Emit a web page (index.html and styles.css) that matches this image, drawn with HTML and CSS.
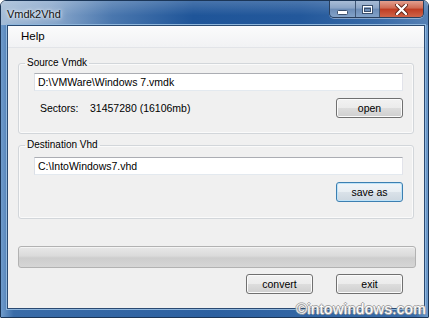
FILE: index.html
```html
<!DOCTYPE html>
<html lang="en">
<head>
  <meta charset="UTF-8" />
  <title>Vmdk2Vhd</title>
  <link rel="stylesheet" href="styles.css">
</head>
<body>
  <div class="window">
    <div class="titlebar">
      <span class="title">Vmdk2Vhd</span>
      <div class="caption-btns">
        <span class="cap cap-min">
          <svg width="11" height="5" viewBox="0 0 11 5"><rect x="0.5" y="0.5" width="10" height="4" rx="1" fill="#fff" stroke="#3a4f6c" stroke-width="1"/></svg>
        </span>
        <span class="cap cap-max">
          <svg width="11" height="9" viewBox="0 0 11 9"><rect x="0.5" y="0.5" width="10" height="8" fill="none" stroke="#3a4f6c"/><rect x="1.5" y="1.5" width="8" height="6" fill="none" stroke="#fff" stroke-width="1"/><rect x="2.5" y="3.5" width="6" height="3" fill="none" stroke="#3a4f6c" stroke-width="1"/></svg>
        </span>
        <span class="cap cap-close">
          <svg width="13" height="11" viewBox="0 0 13 11"><path d="M2 1 L11 10 M11 1 L2 10" stroke="#5a2015" stroke-width="4" stroke-linecap="round"/><path d="M2 1 L11 10 M11 1 L2 10" stroke="#fff" stroke-width="2.4" stroke-linecap="round"/></svg>
        </span>
      </div>
    </div>

    <div class="frame-body">
      <div class="client">
        <div class="menubar"><span class="menu-item">Help</span></div>

        <fieldset class="group group-source">
          <legend>Source Vmdk</legend>
          <div class="group-body">
            <div class="textbox">D:\VMWare\Windows 7.vmdk</div>
            <div class="row">
              <span class="label">Sectors:</span>
              <span class="value">31457280 (16106mb)</span>
              <button class="btn">open</button>
            </div>
          </div>
        </fieldset>

        <fieldset class="group group-dest">
          <legend>Destination Vhd</legend>
          <div class="group-body">
            <div class="textbox">C:\IntoWindows7.vhd</div>
            <div class="row">
              <button class="btn btn-focus">save as</button>
            </div>
          </div>
        </fieldset>

        <div class="progress"></div>

        <div class="actions">
          <button class="btn">convert</button>
          <button class="btn">exit</button>
        </div>
      </div>
    </div>
  </div>

  <div class="watermark">©intowindows.com</div>
</body>
</html>
```

FILE: styles.css
```css
body {
  margin: 0;
  background: #ffffff;
  font-family: 'Liberation Sans', Arial, sans-serif;
  position: relative;
  width: 434px;
  height: 320px;
  overflow: hidden;
}

.window {
  width: 429px;
  height: 318px;
  box-sizing: border-box;
  border: 1px solid #1b3658;
  border-radius: 6px 6px 1px 1px;
  overflow: hidden;
  display: flex;
  flex-direction: column;
}

.titlebar {
  height: 24px;
  display: flex;
  justify-content: space-between;
  align-items: flex-start;
  background:
    linear-gradient(rgba(255, 255, 255, 0.18), rgba(255, 255, 255, 0) 60%),
    linear-gradient(90deg, #a4bcd7 0, #8aa8cc 12%, #4a77ae 26%, #1f5599 45%, #23589b 70%, #386aa7 88%, #5580b4 100%);
}

.title {
  padding: 6px 0 0 6px;
  font-size: 11px;
  line-height: 14px;
  color: #111;
  text-shadow: 0 0 6px #ffffff, 0 0 3px #ffffff;
}

.caption-btns {
  display: flex;
  margin-right: 4px;
  border: 1px solid #2a3f5c;
  border-top: none;
  border-radius: 0 0 5px 5px;
  overflow: hidden;
  box-shadow: 0 1px 0 rgba(255, 255, 255, 0.4);
}

.cap {
  height: 16px;
  display: flex;
  align-items: center;
  justify-content: center;
}

.cap-min,
.cap-max {
  width: 25px;
  background: linear-gradient(#a8bcd6, #8aa4c6 45%, #6c8cb6 50%, #82a2c8);
  border-right: 1px solid #3f5675;
}

.cap-max {
  width: 23px;
}

.cap-min svg {
  margin-top: 6px;
}

.cap-close {
  width: 43px;
  background: linear-gradient(#e3a08f, #cf6a52 45%, #bf3c22 50%, #cf6449);
}

.frame-body {
  flex: 1;
  display: flex;
  padding: 0 3px 8px 6px;
  background: linear-gradient(90deg, #6f9bcb, #3a6ca8 3%, #2c60a0 50%, #3a6ca8 97%, #6f9bcb);
}

.client {
  flex: 1;
  background: #f0f0f0;
  border: 1px solid #2a4a72;
  box-shadow: 0 0 0 1px #8fb6dc;
  display: flex;
  flex-direction: column;
}

.menubar {
  height: 21px;
  background: linear-gradient(#fbfbfc, #f1f2f4);
  border-bottom: 1px solid #e2e4e8;
}

.menu-item {
  display: inline-block;
  padding-left: 13px;
  font-size: 11.5px;
  line-height: 21px;
  color: #000;
}

.group {
  margin: 8px 0 0 10px;
  width: 396px;
  box-sizing: border-box;
  border: 1px solid #d2d6da;
  border-radius: 3px;
  padding: 3px 10px 15px 6px;
  box-shadow: inset 0 0 0 1px #fafafa;
  min-width: 0;
}

.group-dest {
  margin-top: 4px;
  padding-top: 5px;
  padding-bottom: 16px;
}

.group legend {
  padding: 0 2px;
  font-size: 10px;
  line-height: 14px;
  color: #000;
}

.group-body {
  padding-left: 9px;
}

.textbox {
  height: 18px;
  box-sizing: border-box;
  background: #ffffff;
  border: 1px solid;
  border-color: #abadb3 #e2e3ea #e3e9ef #dbdfe6;
  padding: 0 3px;
  font-size: 10.5px;
  line-height: 16px;
  color: #000;
}

.row {
  display: flex;
  align-items: center;
  margin-top: 7px;
  font-size: 10.5px;
}

.label {
  width: 50px;
  padding-left: 6px;
}

.row .btn {
  margin-left: auto;
}

.btn {
  width: 67px;
  height: 20px;
  box-sizing: border-box;
  padding: 0;
  border: 1px solid #707070;
  border-radius: 3px;
  background: linear-gradient(#f2f2f2, #ebebeb 50%, #dddddd 50%, #cfcfcf);
  box-shadow: inset 0 0 0 1px #fbfbfb;
  font-family: 'Liberation Sans', Arial, sans-serif;
  font-size: 10.5px;
  color: #000;
}

.btn-focus {
  border-color: #3c7fb1;
  background: linear-gradient(#f1f5f9, #e8eef3 50%, #dae2e9 50%, #cdd7e0);
  box-shadow: inset 0 0 0 1px #bfe3f8;
}

.progress {
  margin: 27px 0 0 10px;
  width: 398px;
  height: 22px;
  box-sizing: border-box;
  border: 1px solid #b2b2b2;
  border-radius: 3px;
  background: linear-gradient(#e8e8e8, #dadada 45%, #cdcdcd 55%, #d6d6d6);
  box-shadow: inset 0 1px 0 #f4f4f4;
}

.actions {
  display: flex;
  justify-content: flex-end;
  gap: 23px;
  margin-top: 6px;
  padding-right: 21px;
}

.watermark {
  position: absolute;
  right: 8px;
  bottom: 3px;
  font-size: 15px;
  line-height: 16px;
  letter-spacing: 0.3px;
  color: #ffffff;
  text-shadow: 1px 0 0 #a2a2a2, -1px 0 0 #a2a2a2, 0 1px 0 #a2a2a2, 0 -1px 0 #a2a2a2;
}
```
